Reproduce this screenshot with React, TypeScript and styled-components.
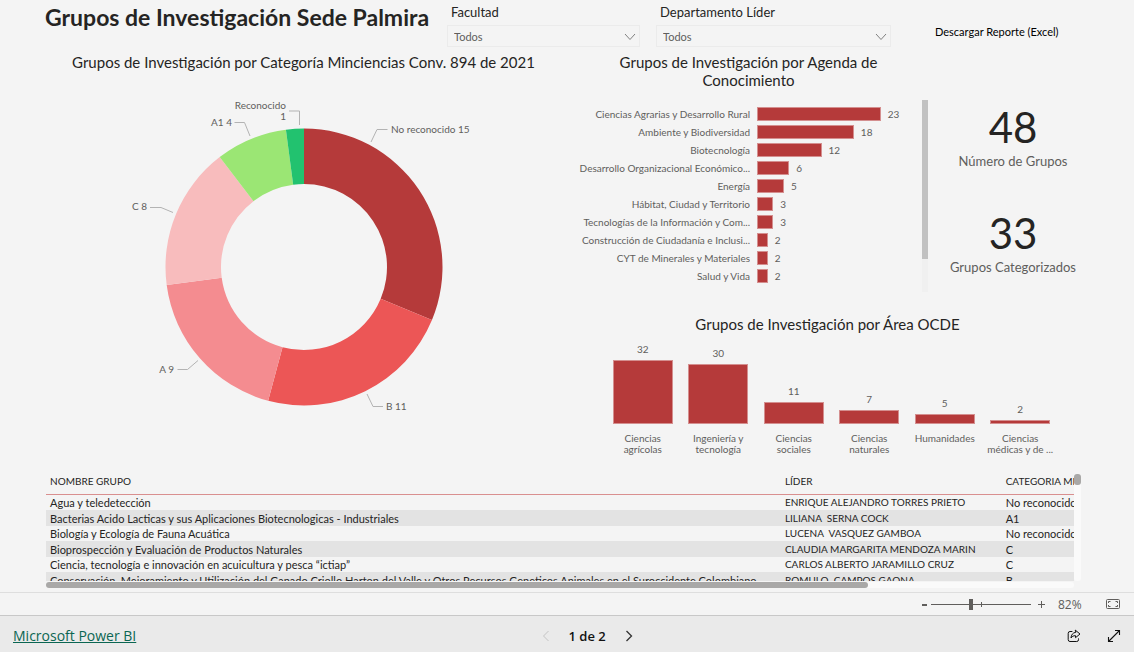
import React from "react";
import styled, { createGlobalStyle } from "styled-components";

const Global = createGlobalStyle`
  * { box-sizing: border-box; }
  body { margin: 0; background: #f4f4f4; }
  button, select, input { font-family: inherit; }
`;

const reportFont = `"Trebuchet MS", Lato, "Open Sans", sans-serif`;
const chromeFont = `"Segoe UI", "Open Sans", "Noto Sans", sans-serif`;
const RED = "#b53a3a";

const Shell = styled.div`
  display: flex;
  flex-direction: column;
  height: 100vh;
  min-height: 640px;
  background: #f4f4f4;
  color: #252423;
  font-family: ${reportFont};
`;

const Report = styled.main`
  flex: 1;
  min-height: 0;
  display: flex;
  flex-direction: column;
`;

const Header = styled.header`
  display: flex;
  align-items: flex-start;
  height: 52px;
  padding: 4px 20px 0 45px;
`;

const Title = styled.h1`
  flex: 402 1 0;
  margin: 0;
  font-size: 23px;
  line-height: 26px;
  font-weight: 700;
  white-space: nowrap;
`;

const Field = styled.div<{ $grow: number }>`
  flex: ${(p) => p.$grow} 1 0;
  min-width: 0;
  margin-right: 16px;
`;

const FieldLabel = styled.label`
  display: block;
  padding-left: 4px;
  font-size: 13px;
  line-height: 16px;
  margin-bottom: 5px;
`;

const SelectBox = styled.div`
  position: relative;
  svg {
    position: absolute;
    right: 4px;
    top: 8px;
    pointer-events: none;
  }
`;

const Select = styled.select`
  display: block;
  width: 100%;
  height: 22px;
  padding: 0 6px;
  appearance: none;
  border: 1px solid #ebebeb;
  border-radius: 0;
  background: transparent;
  color: #605e5c;
  font-size: 11px;
`;

const Download = styled.a`
  flex: 179 1 0;
  padding: 20px 0 0 28px;
  font-size: 11px;
  line-height: 16px;
  color: #000;
  text-decoration: none;
  white-space: nowrap;
`;

const Charts = styled.div`
  display: grid;
  grid-template-columns: 560fr 574fr;
`;

const DonutPanel = styled.section`
  padding-left: 47px;
  svg { display: block; width: calc(100% + 47px); margin-left: -47px; }
  text { font-size: 10px; fill: #605e5c; }
`;

const ChartTitle = styled.h2`
  margin: 0;
  padding-top: 1px;
  font-size: 15px;
  line-height: 18px;
  font-weight: 400;
  text-align: center;
`;

const RightColumn = styled.div`
  padding: 0 54px 0 15px;
`;

const TopRight = styled.div`
  display: grid;
  grid-template-columns: 353fr 152fr;
`;

const AgendaTitle = styled(ChartTitle)`
  padding-left: 32px;
  padding-right: 38px;
`;

const AgendaBody = styled.div`
  display: flex;
  margin-top: 11px;
  height: 192px;
`;

const BarList = styled.ul`
  flex: 1;
  min-width: 0;
  margin: 0;
  padding: 5px 0 0;
  list-style: none;
`;

const BarRow = styled.li`
  display: grid;
  grid-template-columns: 175fr 165fr;
  column-gap: 7px;
  align-items: center;
  height: 18px;
  font-size: 10px;
  color: #605e5c;
`;

const BarName = styled.span`
  overflow: hidden;
  text-align: right;
  text-overflow: ellipsis;
  white-space: nowrap;
`;

const BarTrack = styled.div`
  display: flex;
  align-items: center;
  gap: 7px;
`;

const Bar = styled.div`
  height: 14px;
  border: 1px solid #d48f8f;
  background: ${RED};
`;

const VTrack = styled.div<{ $round?: boolean }>`
  flex: none;
  width: ${(p) => (p.$round ? 7 : 6)}px;
  margin-top: ${(p) => (p.$round ? 6 : 0)}px;
  border-radius: ${(p) => (p.$round ? 3 : 0)}px;
  background: ${(p) => (p.$round ? "#fafafa" : "#f0f0f0")};
`;

const VThumb = styled.div<{ $size: string; $round?: boolean }>`
  height: ${(p) => p.$size};
  border-radius: ${(p) => (p.$round ? 3 : 0)}px;
  background: ${(p) => (p.$round ? "#a9a8a7" : "#c1c1c1")};
`;

const Kpis = styled.div`
  display: flex;
  flex-direction: column;
  gap: 38px;
  padding-top: 51px;
  margin-left: 6px;
  margin-right: -12px;
`;

const Kpi = styled.div`
  text-align: center;
  strong {
    display: block;
    font-size: 42px;
    line-height: 48px;
    font-weight: 400;
  }
  span {
    display: block;
    font-size: 13px;
    line-height: 20px;
    color: #605e5c;
    white-space: nowrap;
  }
`;

const AreaPanel = styled.section`
  margin-top: 22px;
`;

const Columns = styled.ul`
  display: grid;
  grid-template-columns: repeat(6, 1fr);
  margin: 0 22px 0 30px;
  padding: 0;
  list-style: none;
`;

const ColumnItem = styled.li`
  display: flex;
  flex-direction: column;
  align-items: center;
  font-size: 10px;
  color: #605e5c;
`;

const ColumnPlot = styled.div`
  display: flex;
  flex-direction: column;
  justify-content: flex-end;
  align-items: center;
  gap: 5px;
  width: 79%;
  height: 91px;
  line-height: 12px;
`;

const ColumnBar = styled.div`
  width: 100%;
  border: 1px solid #d48f8f;
  background: ${RED};
`;

const ColumnName = styled.span`
  height: 24px;
  margin-top: 9px;
  line-height: 11px;
  text-align: center;
  white-space: pre;
`;

const TableArea = styled.section`
  flex: 1;
  min-height: 0;
  display: grid;
  grid-template-columns: 1fr 7px;
  grid-template-rows: 1fr 6px;
  row-gap: 1px;
  margin: 11px 53px 4px 46px;
`;

const TableClip = styled.div`
  min-height: 0;
  overflow: hidden;
`;

const Table = styled.table`
  width: 122%;
  table-layout: fixed;
  border-collapse: separate;
  border-spacing: 0;
  font-size: 11px;
  color: #252423;
`;

const HeadCell = styled.th`
  height: 27px;
  padding: 0 4px;
  border-bottom: 1px solid #d98f8f;
  font-size: 10px;
  font-weight: 400;
  line-height: 15px;
  text-align: left;
  white-space: nowrap;
`;

const BodyRow = styled.tr`
  height: 15px;
  &:nth-child(even) {
    height: 16px;
    background: #e3e3e3;
  }
`;

const Cell = styled.td<{ $caps?: boolean }>`
  padding: 0 4px;
  font-size: ${(p) => (p.$caps ? 10 : 11)}px;
  line-height: 15px;
  white-space: pre;
`;

const Col = styled.col<{ $w: number }>`
  width: ${(p) => p.$w}%;
`;

const HTrack = styled.div`
  border-radius: 3px;
  background: #fafafa;
`;

const HThumb = styled.div`
  width: 80%;
  height: 6px;
  border-radius: 3px;
  background: #a9a8a7;
`;

const ZoomBar = styled.div`
  display: flex;
  align-items: center;
  justify-content: flex-end;
  height: 23px;
  padding-right: 14px;
  border-top: 1px solid #dedede;
  font-family: ${chromeFont};
  font-size: 12px;
  color: #605e5c;
`;

const PlainButton = styled.button`
  display: flex;
  align-items: center;
  justify-content: center;
  padding: 0;
  border: 0;
  background: none;
  color: inherit;
`;

const ZoomStep = styled(PlainButton)`
  width: 14px;
  height: 20px;
`;

const RangeBox = styled.div`
  position: relative;
  width: 100px;
  margin-right: 3px;
  &::after {
    content: "";
    position: absolute;
    left: 50px;
    top: 7px;
    width: 1px;
    height: 5px;
    background: #605e5c;
  }
`;

const Range = styled.input`
  display: block;
  width: 100%;
  height: 18px;
  margin: 0;
  appearance: none;
  background: linear-gradient(#605e5c, #605e5c) center / 100% 1px no-repeat;
  &::-webkit-slider-thumb {
    appearance: none;
    width: 4px;
    height: 11px;
    background: #605e5c;
  }
`;

const ZoomValue = styled.span`
  width: 34px;
  margin-left: 10px;
`;

const FitButton = styled(PlainButton)`
  margin-left: 14px;
`;

const Footer = styled.footer`
  display: flex;
  align-items: center;
  justify-content: space-between;
  height: 37px;
  padding-left: 13px;
  padding-top: 3px;
  border-top: 1px solid #c8c8c8;
  background: #eaeaea;
  font-family: ${chromeFont};
  font-size: 14px;
  color: #111;
`;

const BrandLink = styled.a`
  color: #0b6652;
  text-decoration: underline;
`;

const Pager = styled.nav`
  display: flex;
  align-items: center;
  gap: 13px;
  font-size: 13px;
  font-weight: 600;
`;

const PageButton = styled(PlainButton)<{ $off?: boolean }>`
  width: 20px;
  height: 24px;
  color: ${(p) => (p.$off ? "#c4c4c4" : "#333")};
`;

const Actions = styled.div`
  display: flex;
  padding-left: 16px;
`;

const ActionButton = styled(PlainButton)`
  width: 40px;
  height: 32px;
`;

const agenda: [string, number][] = [
  ["Ciencias Agrarias y Desarrollo Rural", 23],
  ["Ambiente y Biodiversidad", 18],
  ["Biotecnología", 12],
  ["Desarrollo Organizacional Económico...", 6],
  ["Energía", 5],
  ["Hábitat, Ciudad y Territorio", 3],
  ["Tecnologías de la Información y Com...", 3],
  ["Construcción de Ciudadanía e Inclusi...", 2],
  ["CYT de Minerales y Materiales", 2],
  ["Salud y Vida", 2],
];

const areas: [string, number][] = [
  ["Ciencias\nagrícolas", 32],
  ["Ingeniería y\ntecnología", 30],
  ["Ciencias\nsociales", 11],
  ["Ciencias\nnaturales", 7],
  ["Humanidades", 5],
  ["Ciencias\nmédicas y de ...", 2],
];

const groups = [
  ["Agua y teledetección", "ENRIQUE ALEJANDRO TORRES PRIETO", "No reconocido"],
  ["Bacterias Acido Lacticas y sus Aplicaciones Biotecnologicas - Industriales", "LILIANA  SERNA COCK", "A1"],
  ["Biología y Ecología de Fauna Acuática", "LUCENA  VASQUEZ GAMBOA", "No reconocido"],
  ["Bioprospección y Evaluación de Productos Naturales", "CLAUDIA MARGARITA MENDOZA MARIN", "C"],
  ["Ciencia, tecnología e innovación en acuicultura y pesca “ictiap”", "CARLOS ALBERTO JARAMILLO CRUZ", "C"],
  ["Conservación, Mejoramiento y Utilización del Ganado Criollo Harton del Valle y Otros Recursos Geneticos Animales en el Suroccidente Colombiano", "ROMULO  CAMPOS GAONA", "B"],
];

const slices: [number, string][] = [
  [15, RED],
  [11, "#ec5656"],
  [9, "#f48c90"],
  [8, "#f8bcbd"],
  [4, "#9be674"],
  [1, "#22c26f"],
];

const CX = 304;
const CY = 267;

function slicePath(from: number, to: number) {
  const pt = (r: number, a: number) =>
    `${(CX + r * Math.sin(a)).toFixed(2)} ${(CY - r * Math.cos(a)).toFixed(2)}`;
  const large = to - from > Math.PI ? 1 : 0;
  return `M${pt(138.5, from)} A138.5 138.5 0 ${large} 1 ${pt(138.5, to)} L${pt(83, to)} A83 83 0 ${large} 0 ${pt(83, from)}Z`;
}

function Donut() {
  const total = slices.reduce((s, [v]) => s + v, 0);
  let acc = 0;
  return (
    <svg viewBox="0 71 560 358" role="img" aria-label="Grupos por categoría">
      {slices.map(([v, color]) => {
        const a = (acc / total) * Math.PI * 2;
        acc += v;
        const b = (acc / total) * Math.PI * 2;
        return <path key={color} d={slicePath(a, b)} fill={color} />;
      })}
      <g fill="none" stroke="#b3b3b3">
        <path d="M371 142l6-12.500h10.500" />
        <path d="M367 394l6 12.500h10" />
        <path d="M198 360.500l-10.500 9h-10" />
        <path d="M173 212.500l-12-5h-11" />
        <path d="M250 136l-5.500-13.500h-10" />
        <path d="M299.500 125v-14h-10.500" />
      </g>
      <text x="391" y="133">No reconocido 15</text>
      <text x="386" y="410">B 11</text>
      <text x="174" y="373" textAnchor="end">A 9</text>
      <text x="147" y="210" textAnchor="end">C 8</text>
      <text x="232" y="126" textAnchor="end">A1 4</text>
      <text x="286" y="109" textAnchor="end">Reconocido</text>
      <text x="286" y="120" textAnchor="end">1</text>
    </svg>
  );
}

function Filter({ id, label, grow }: { id: string; label: string; grow: number }) {
  return (
    <Field $grow={grow}>
      <FieldLabel htmlFor={id}>{label}</FieldLabel>
      <SelectBox>
        <Select id={id}>
          <option>Todos</option>
        </Select>
        <svg width="12" height="8" viewBox="0 0 12 8" fill="none" stroke="#808080">
          <path d="M1 1l5 5.500L11 1" />
        </svg>
      </SelectBox>
    </Field>
  );
}

export default function App() {
  return (
    <Shell>
      <Global />
      <Report>
        <Header>
          <Title>Grupos de Investigación Sede Palmira</Title>
          <Filter id="facultad" label="Facultad" grow={193} />
          <Filter id="departamento" label="Departamento Líder" grow={235} />
          <Download href="#reporte">Descargar Reporte (Excel)</Download>
        </Header>

        <Charts>
          <DonutPanel>
            <ChartTitle>Grupos de Investigación por Categoría Minciencias Conv. 894 de 2021</ChartTitle>
            <Donut />
          </DonutPanel>

          <RightColumn>
            <TopRight>
              <section>
                <AgendaTitle>Grupos de Investigación por Agenda de Conocimiento</AgendaTitle>
                <AgendaBody>
                  <BarList>
                    {agenda.map(([name, value]) => (
                      <BarRow key={name}>
                        <BarName>{name}</BarName>
                        <BarTrack>
                          <Bar style={{ width: `${(value / 23) * 75}%` }} />
                          {value}
                        </BarTrack>
                      </BarRow>
                    ))}
                  </BarList>
                  <VTrack>
                    <VThumb $size="83%" />
                  </VTrack>
                </AgendaBody>
              </section>
              <Kpis>
                <Kpi>
                  <strong>48</strong>
                  <span>Número de Grupos</span>
                </Kpi>
                <Kpi>
                  <strong>33</strong>
                  <span>Grupos Categorizados</span>
                </Kpi>
              </Kpis>
            </TopRight>
            <AreaPanel>
              <ChartTitle>Grupos de Investigación por Área OCDE</ChartTitle>
              <Columns>
                {areas.map(([name, value]) => (
                  <ColumnItem key={name}>
                    <ColumnPlot>
                      {value}
                      <ColumnBar style={{ height: value * 2 }} />
                    </ColumnPlot>
                    <ColumnName>{name}</ColumnName>
                  </ColumnItem>
                ))}
              </Columns>
            </AreaPanel>
          </RightColumn>
        </Charts>

        <TableArea>
          <TableClip>
            <Table>
              <colgroup>
                <Col $w={58.6} />
                <Col $w={17.6} />
                <Col $w={23.8} />
              </colgroup>
              <thead>
                <tr>
                  <HeadCell>NOMBRE GRUPO</HeadCell>
                  <HeadCell>LÍDER</HeadCell>
                  <HeadCell>CATEGORIA MINCIENCIAS</HeadCell>
                </tr>
              </thead>
              <tbody>
                {groups.map(([name, leader, category]) => (
                  <BodyRow key={name}>
                    <Cell>{name}</Cell>
                    <Cell $caps>{leader}</Cell>
                    <Cell>{category}</Cell>
                  </BodyRow>
                ))}
              </tbody>
            </Table>
          </TableClip>
          <VTrack $round>
            <VThumb $size="11px" $round />
          </VTrack>
          <HTrack>
            <HThumb />
          </HTrack>
        </TableArea>
      </Report>

      <ZoomBar>
        <ZoomStep aria-label="Alejar">
          <svg width="9" height="9" stroke="currentColor" strokeWidth="2"><path d="M2 5h5" /></svg>
        </ZoomStep>
        <RangeBox>
          <Range type="range" aria-label="Zoom" min={0} max={100} defaultValue={40} />
        </RangeBox>
        <ZoomStep aria-label="Acercar">
          <svg width="9" height="9" stroke="currentColor"><path d="M1 4.500h7M4.500 1v7" /></svg>
        </ZoomStep>
        <ZoomValue>82%</ZoomValue>
        <FitButton aria-label="Ajustar a la página">
          <svg width="14" height="10" viewBox="0 0 14 10" fill="none" stroke="currentColor">
            <rect x="0.500" y="0.500" width="13" height="9" rx="1" />
            <path d="M2.500 4V2.500H4.500M9.500 2.500h2V4M11.500 6v1.500h-2M4.500 7.500h-2V6" />
          </svg>
        </FitButton>
      </ZoomBar>

      <Footer>
        <BrandLink href="#powerbi">Microsoft Power BI</BrandLink>
        <Pager aria-label="Páginas">
          <PageButton $off aria-label="Página anterior">
            <svg width="8" height="12" fill="none" stroke="currentColor"><path d="M6.500 1L1.500 6l5 5" /></svg>
          </PageButton>
          <span>1 de 2</span>
          <PageButton aria-label="Página siguiente">
            <svg width="8" height="12" fill="none" stroke="currentColor" strokeWidth="1.300"><path d="M1.500 1l5 5-5 5" /></svg>
          </PageButton>
        </Pager>
        <Actions>
          <ActionButton aria-label="Compartir">
            <svg width="14" height="14" viewBox="0 0 14 14" fill="none" stroke="#111" strokeLinejoin="round" strokeLinecap="round">
              <path d="M5 2.500H3A1.800 1.800 0 0 0 1.200 4.300v6.400A1.800 1.800 0 0 0 3 12.500h6.700a1.800 1.800 0 0 0 1.800-1.800V9.800" />
              <path d="M8.500 1.300l4.500 3.700-4.500 3.700V6.700C6.300 6.600 5 7.500 4 9c.2-3 1.700-5.400 4.500-5.700z" />
            </svg>
          </ActionButton>
          <ActionButton aria-label="Pantalla completa">
            <svg width="14" height="14" viewBox="0 0 14 14" fill="none" stroke="#111" strokeWidth="1.100">
              <path d="M1.500 12.500l11-11M8 1.500h4.500V6M1.500 8v4.500H6" />
            </svg>
          </ActionButton>
        </Actions>
      </Footer>
    </Shell>
  );
}
